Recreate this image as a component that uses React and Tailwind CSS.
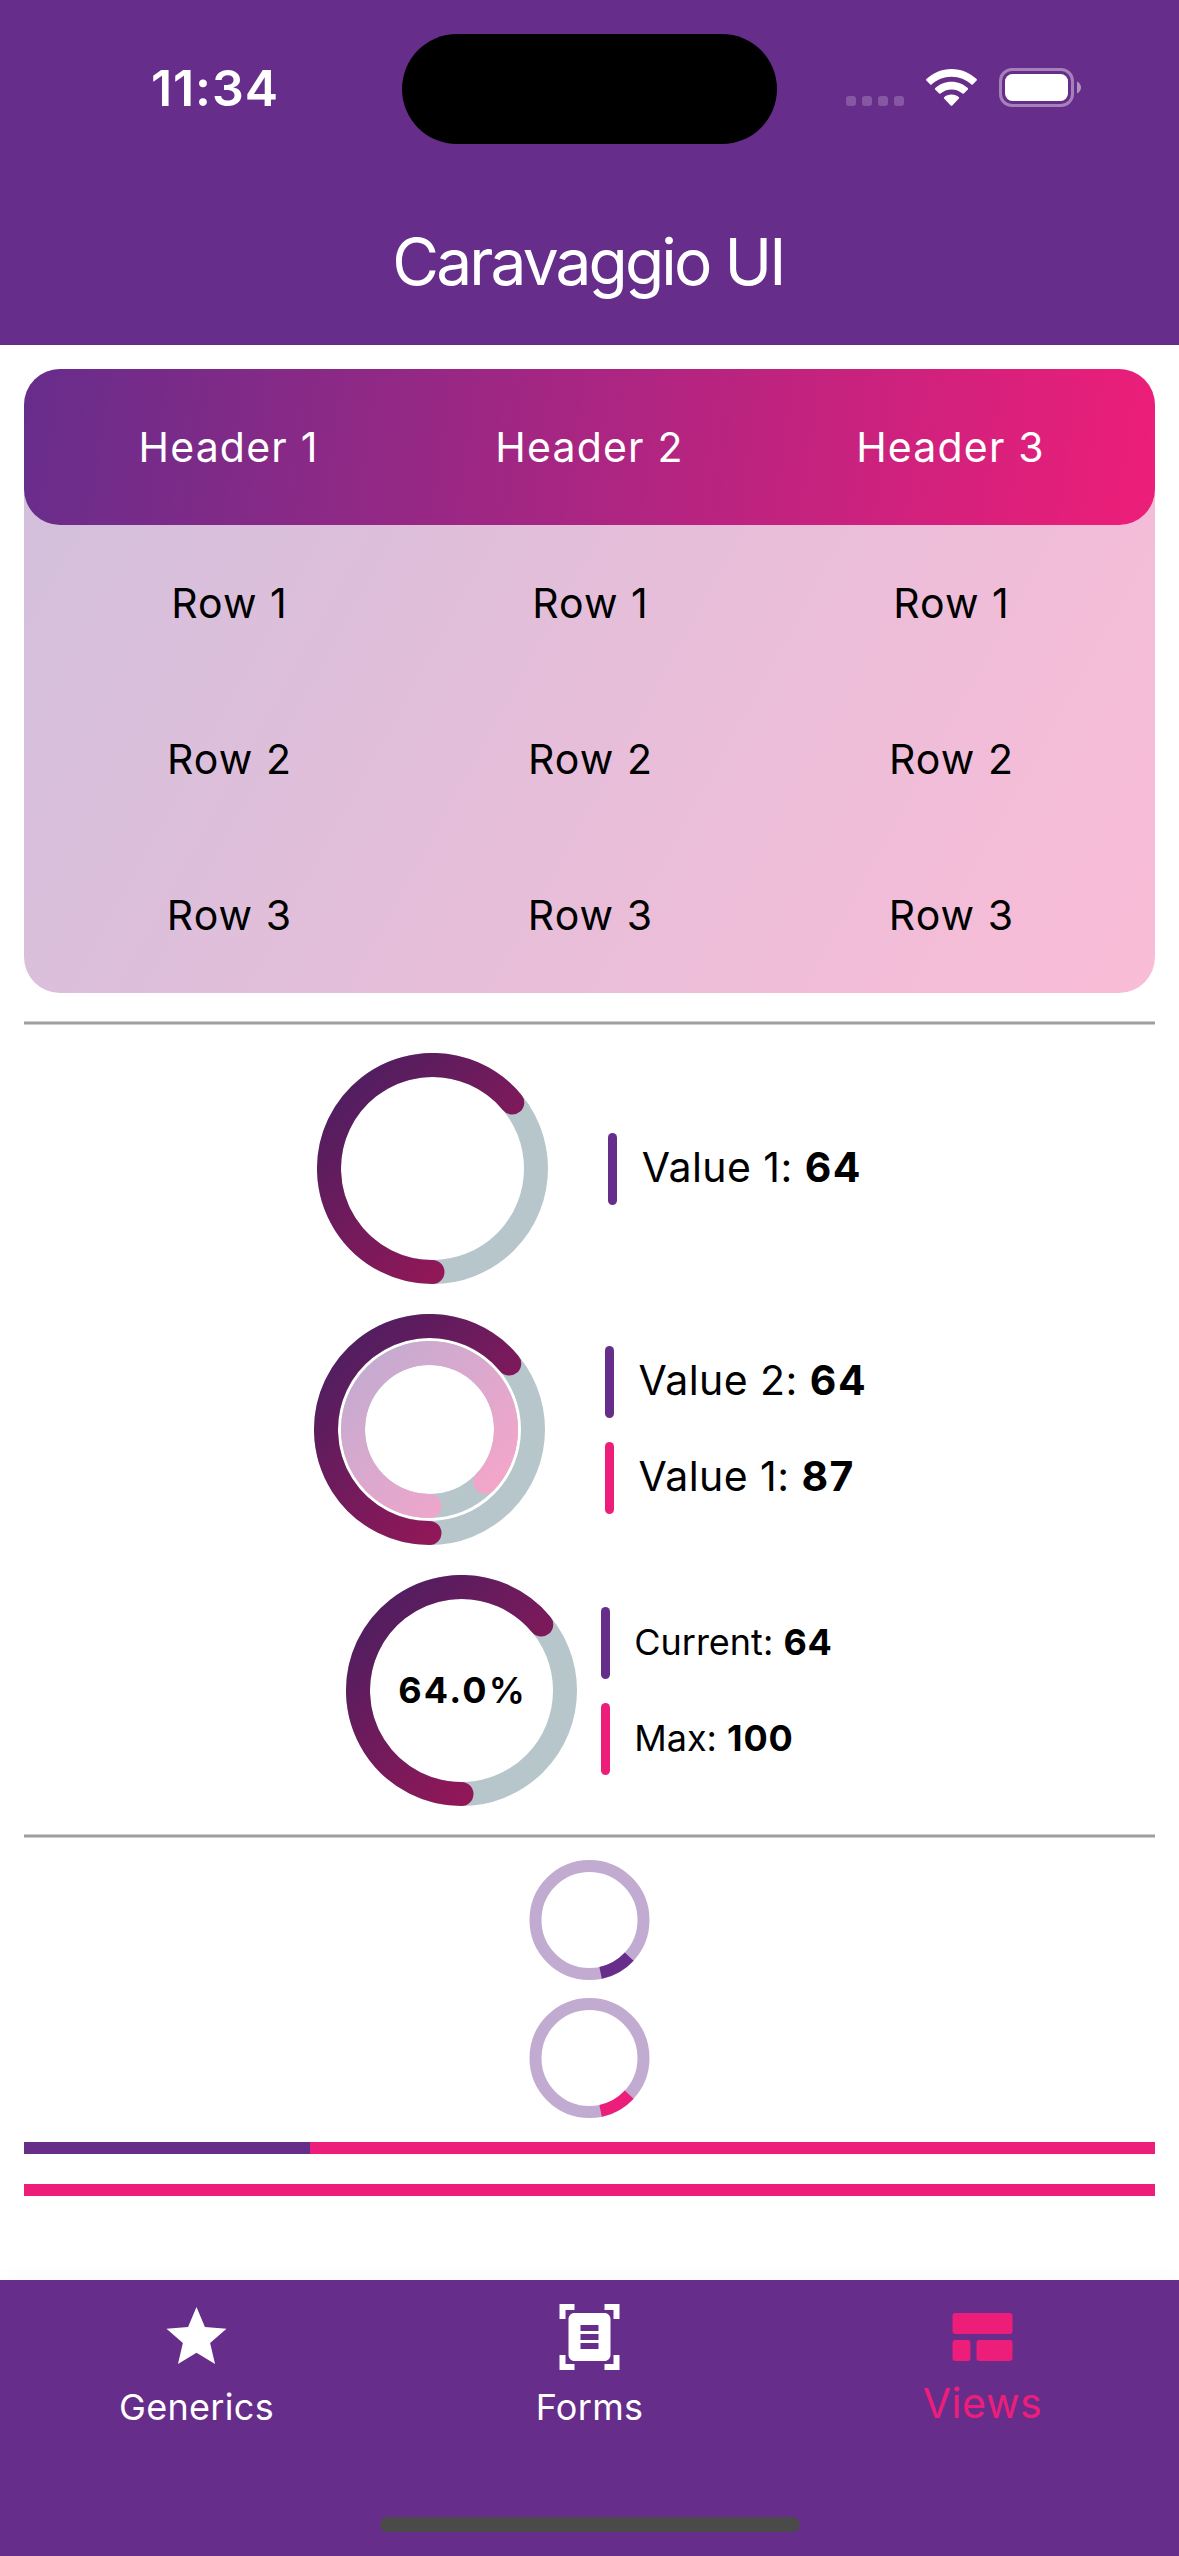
import React from "react";

const HEADERS = ["Header 1", "Header 2", "Header 3"];
const ROWS = ["Row 1", "Row 2", "Row 3"];

function StatusBar() {
  return (
    <div className="relative flex h-[177px] items-start">
      <div className="mt-[63px] ml-[151px] w-[251px] text-[50px] leading-[50px] font-semibold tracking-[0.900px] text-white">
        11:34
      </div>
      <div className="mt-[34px] h-[110px] w-[375px] rounded-full bg-black" />
      <div className="mt-[96px] ml-[69px] flex gap-[6px]">
        {[0, 1, 2, 3].map((i) => (
          <div key={i} className="size-[10px] rounded-[3px] bg-[#8657a2]" />
        ))}
      </div>
      <svg className="mt-[68px] ml-[22px] h-[39px] w-[51px]" viewBox="0 0 51 39" fill="#fff">
        <path d="M25.5 1C35.3 1 44.2 4.9 50.6 11.1C51.1 11.6 51.1 12 50.7 12.5L46.7 16.5C46.3 16.9 45.9 16.9 45.4 16.5C40.2 11.6 33.2 8.7 25.5 8.7C17.8 8.7 10.8 11.6 5.6 16.5C5.1 16.9 4.7 16.9 4.3 16.5L.3 12.5C-.1 12 -.1 11.6 .4 11.1C6.8 4.9 15.7 1 25.5 1Z" />
        <path d="M25.5 13.8C31.8 13.8 37.5 16.2 41.8 20.1C42.3 20.6 42.3 21 41.9 21.4L37.8 25.5C37.4 25.9 37 25.9 36.5 25.5C33.6 23 29.7 21.4 25.5 21.4C21.3 21.4 17.4 23 14.5 25.5C14 25.9 13.6 25.9 13.2 25.5L9.1 21.4C8.7 21 8.7 20.6 9.2 20.1C13.5 16.2 19.2 13.8 25.5 13.8Z" />
        <path d="M25.5 26.6C28.4 26.6 31 27.6 32.9 29.3C33.3 29.7 33.3 30.1 32.9 30.5L26.3 37.4C25.8 37.9 25.2 37.9 24.7 37.4L18.1 30.5C17.7 30.1 17.7 29.7 18.1 29.3C20 27.6 22.6 26.6 25.5 26.6Z" />
      </svg>
      <svg className="mt-[68px] ml-[22px] h-[39px] w-[82px]" viewBox="0 0 82 39" fill="none">
        <rect x="1.5" y="1.5" width="72" height="36" rx="11.5" stroke="#a581b9" strokeWidth="3" />
        <rect x="6" y="6" width="63" height="27" rx="7.5" fill="#fff" />
        <path d="M78 13.5C80.4 14.5 82 16.9 82 19.5C82 22.1 80.4 24.5 78 25.5Z" fill="#b193c3" />
      </svg>
    </div>
  );
}

function Table() {
  return (
    <div className="mx-[24px] mt-[24px] flex h-[624px] flex-col rounded-[36px] bg-[linear-gradient(118.900deg,#d1c0dc,#fabcd7)] text-[41px] leading-[156px]">
      <div className="grid h-[156px] grid-cols-3 rounded-[36px] bg-[linear-gradient(97.850deg,#672d8b,#ed1e79)] px-[24px] text-center tracking-[1.200px] text-white">
        {HEADERS.map((h) => (
          <div key={h}>{h}</div>
        ))}
      </div>
      {ROWS.map((r) => (
        <div key={r} className="grid h-[156px] grid-cols-3 pr-[23px] pl-[25px] text-center tracking-[1.050px] text-black">
          {HEADERS.map((h) => (
            <div key={h}>{r}</div>
          ))}
        </div>
      ))}
    </div>
  );
}

function Divider() {
  return (
    <div className="mx-[24px] flex h-[60px] items-center">
      <div className="h-[4px] w-full border-y border-[#cecece] bg-[#9e9e9e]" />
    </div>
  );
}

// Clockwise arc that starts at the bottom of the circle.
function arc(c, r, fraction) {
  const end = Math.PI / 2 + fraction * Math.PI * 2;
  const x = c + r * Math.cos(end);
  const y = c + r * Math.sin(end);
  return `M${c} ${c + r}A${r} ${r} 0 ${fraction > 0.5 ? 1 : 0} 1 ${x} ${y}`;
}

function Ring({ id, outer, inner, label }) {
  return (
    <div className="relative size-[231px] shrink-0">
      <svg className="size-[231px]" viewBox="0 0 231 231" fill="none">
        <defs>
          <linearGradient id={`${id}-outer`} gradientUnits="userSpaceOnUse" x1="12" y1="12" x2="219" y2="219">
            <stop stopColor="#481f61" />
            <stop offset="1" stopColor="#a61555" />
          </linearGradient>
          <linearGradient id={`${id}-inner`} gradientUnits="userSpaceOnUse" x1="39" y1="39" x2="192" y2="192">
            <stop stopColor="#c2abd1" />
            <stop offset="1" stopColor="#f8a5c9" />
          </linearGradient>
        </defs>
        <circle cx="115.5" cy="115.5" r="103.5" stroke="#b7c6cb" strokeWidth="24" />
        <path d={arc(115.5, 103.5, outer)} stroke={`url(#${id}-outer)`} strokeWidth="24" strokeLinecap="round" />
        {inner && (
          <>
            <circle cx="115.5" cy="115.5" r="76.5" stroke="#b7c6cb" strokeWidth="24" />
            <path d={arc(115.5, 76.5, inner)} stroke={`url(#${id}-inner)`} strokeWidth="24" strokeLinecap="round" />
          </>
        )}
      </svg>
      {label && (
        <div className="absolute inset-0 pl-[2px] text-center text-[36px] leading-[231px] font-bold tracking-[2.200px]">
          {label}
          <span className="font-semibold">%</span>
        </div>
      )}
    </div>
  );
}

function Legend({ name, value, pink, small }) {
  return (
    <div className="flex h-[72px] items-center">
      <div className={pink ? "h-[72px] w-[9px] rounded-full bg-[#ed1e79]" : "h-[72px] w-[9px] rounded-full bg-[#672d8b]"} />
      <div
        className={
          small
            ? "ml-[24px] pb-[1.500px] text-[36px] leading-[70px] whitespace-pre"
            : "ml-[25px] pb-[3px] text-[41px] leading-[69px] tracking-[0.450px] whitespace-pre"
        }
      >
        {name}: <b className={small ? "font-bold tracking-[0.800px]" : "font-bold tracking-[1.500px]"}>{value}</b>
      </div>
    </div>
  );
}

function Spinner({ color }) {
  return (
    <svg className="h-[120px] w-[121px]" viewBox="0 0 120 120" fill="none" strokeWidth="12">
      <circle cx="60" cy="60" r="54" stroke="#c2abd1" />
      <path d="M99.7 96.6A54 54 0 0 1 71.1 112.8" stroke={color} />
    </svg>
  );
}

function Tab({ label, active, children }) {
  return (
    <div className={active ? "flex w-[393px] flex-col items-center text-[#ed1e79]" : "flex w-[393px] flex-col items-center text-white"}>
      <svg className="h-[72px] w-[73px]" viewBox="0 0 24 24" fill="currentColor">
        {children}
      </svg>
      <div
        className={
          active
            ? "mt-[3px] text-[41px] leading-[54px] tracking-[0.600px]"
            : "mt-[7px] text-[36px] leading-[54px] tracking-[0.300px]"
        }
      >
        {label}
      </div>
    </div>
  );
}

export default function App() {
  return (
    <div className="flex h-[2556px] w-[1179px] flex-col overflow-hidden bg-white font-[Inter,sans-serif] text-black">
      <header className="h-[345px] shrink-0 bg-[#672d8b]">
        <StatusBar />
        <h1 className="pr-[3px] text-center text-[64px] leading-[169px] font-normal tracking-[-2.860px] text-white">Caravaggio UI</h1>
      </header>

      <main className="flex h-[1935px] shrink-0 flex-col">
        <Table />
        <Divider />
        <section className="flex flex-col gap-[30px]">
          <div className="flex items-center pl-[316.800px]">
            <Ring id="single" outer={0.64} />
            <div className="ml-[60px]">
              <Legend name="Value 1" value="64" />
            </div>
          </div>
          <div className="flex items-center pl-[314px]">
            <Ring id="double" outer={0.64} inner={0.87} />
            <div className="ml-[59.500px] flex flex-col gap-[24px]">
              <Legend name="Value 2" value="64" />
              <Legend name="Value 1" value="87" pink />
            </div>
          </div>
          <div className="flex items-center pl-[346.200px]">
            <Ring id="percent" outer={0.64} label="64.0" />
            <div className="ml-[24px] flex flex-col gap-[24px]">
              <Legend name="Current" value="64" small />
              <Legend name="Max" value="100" small pink />
            </div>
          </div>
        </section>
        <Divider />
        <section className="mt-[-6px] flex flex-col items-center gap-[18px]">
          <Spinner color="#672d8b" />
          <Spinner color="#ed1e79" />
        </section>
        <div className="mx-[24px] mt-[24px] flex h-[12px] bg-[#ed1e79]">
          <div className="w-[285.500px] bg-[#672d8b]" />
        </div>
        <div className="mx-[24px] mt-[30px] h-[12px] bg-[#ed1e79]" />
      </main>

      <nav className="flex h-[276px] shrink-0 flex-col bg-[#672d8b] shadow-[0_0_24px_rgba(0,0,0,0.030)]">
        <div className="flex h-[237px] pt-[21px]">
          <Tab label="Generics">
            <path d="M12 17.27 18.18 21l-1.64-7.03L22 9.24l-7.19-.61L12 2 9.19 8.63 2 9.24l5.46 4.73L5.82 21z" />
          </Tab>
          <Tab label="Forms">
            <path d="M7 3H4v3H2V1h5v2zM22 6V1h-5v2h3v3h2zM7 21H4v-3H2v5h5v-2zM20 18v3h-3v2h5v-5h-2zM19 18c0 1.1-.9 2-2 2H7c-1.1 0-2-.9-2-2V6c0-1.1.9-2 2-2h10c1.1 0 2 .9 2 2v12zM15 8H9v2h6V8zM15 11H9v2h6v-2zM15 14H9v2h6v-2z" />
          </Tab>
          <Tab label="Views" active>
            <rect x="2" y="4" width="20" height="7" rx="1" />
            <rect x="2" y="13" width="6" height="7" rx="1" />
            <rect x="10" y="13" width="12" height="7" rx="1" />
          </Tab>
        </div>
        <div className="mx-auto h-[15px] w-[420px] rounded-full bg-[#4a4a4a]" />
      </nav>
    </div>
  );
}
